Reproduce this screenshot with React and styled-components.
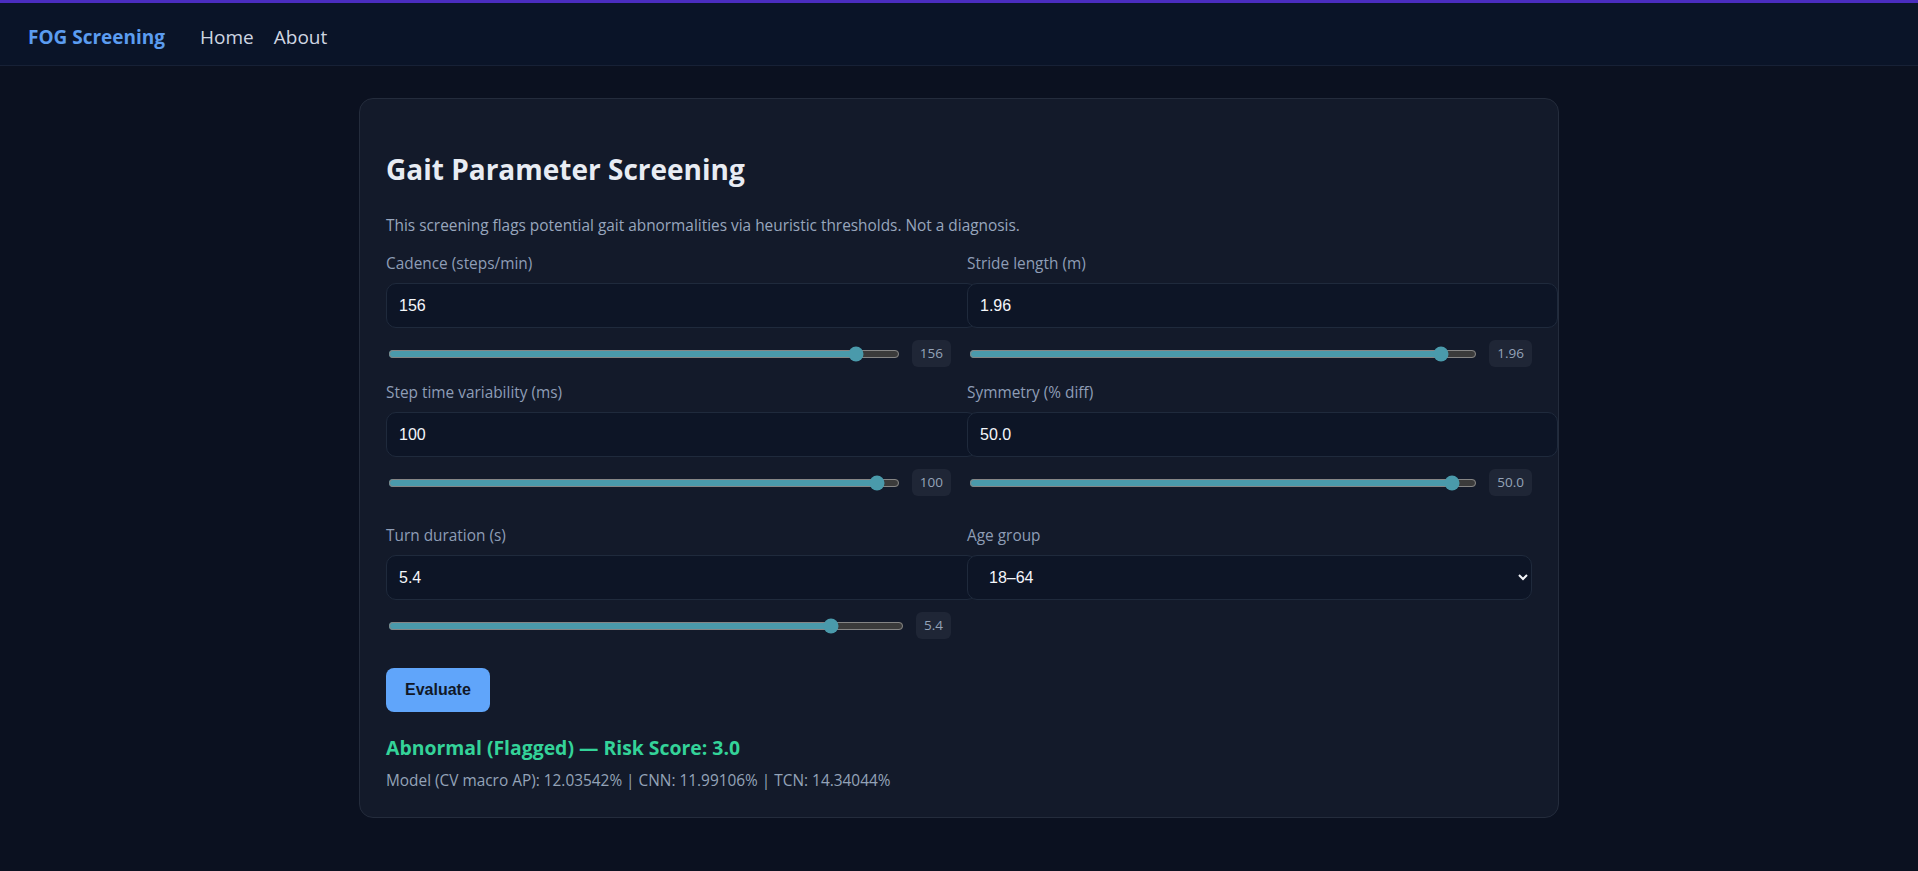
import React, { useState } from 'react';
import styled, { createGlobalStyle } from 'styled-components';

const GlobalStyle = createGlobalStyle`
    html, body{
        margin: 0;
        padding: 0;
        background: #0b1120;
        color-scheme: dark;
    }
    body{
        font-family: "Open Sans", "Noto Sans", sans-serif;
        min-height: 100vh;
    }
`

const fields = [
    { key: 'cadence', label: 'Cadence (steps/min)', min: 40, max: 165, step: 1, fmt: v => String(v) },
    { key: 'stride', label: 'Stride length (m)', min: 0.3, max: 2.06, step: 0.01, fmt: v => v.toFixed(2) },
    { key: 'variability', label: 'Step time variability (ms)', min: 5, max: 103, step: 1, fmt: v => String(v) },
    { key: 'symmetry', label: 'Symmetry (% diff)', min: 0, max: 51.8, step: 0.1, fmt: v => v.toFixed(1) },
];

const App = () => {

    const [values, setValues] = useState({
        cadence: 156,
        stride: 1.96,
        variability: 100,
        symmetry: 50.0,
        turn: 5.4,
    });
    const [age, setAge] = useState('18-64');

    const update = (key, v) => setValues(prev => ({ ...prev, [key]: Number(v) }));

    const renderField = f => (
        <Field key={f.key}>
            <Label>{f.label}</Label>
            <TextInput value={f.fmt(values[f.key])} onChange={e => update(f.key, e.target.value)} />
            <SliderRow>
                <Range type="range" min={f.min} max={f.max} step={f.step} value={values[f.key]}
                    onChange={e => update(f.key, e.target.value)} />
                <Badge>{f.fmt(values[f.key])}</Badge>
            </SliderRow>
        </Field>
    )

    return(
        <>
            <GlobalStyle />
            <Nav>
                <Brand>FOG Screening</Brand>
                <NavLink>Home</NavLink>
                <NavLink>About</NavLink>
            </Nav>
            <Main>
                <Card>
                    <Title>Gait Parameter Screening</Title>
                    <Intro>This screening flags potential gait abnormalities via heuristic thresholds. Not a diagnosis.</Intro>
                    <FieldGrid $top={18}>
                        {fields.map(renderField)}
                    </FieldGrid>
                    <FieldGrid $top={30}>
                        {renderField({ key: 'turn', label: 'Turn duration (s)', min: 0, max: 6.2, step: 0.1, fmt: v => v.toFixed(1) })}
                        <Field>
                            <Label>Age group</Label>
                            <Select value={age} onChange={e => setAge(e.target.value)}>
                                <option value="18-64">18–64</option>
                                <option value="65+">65+</option>
                            </Select>
                        </Field>
                    </FieldGrid>
                    <Button>Evaluate</Button>
                    <Result>Abnormal (Flagged) — Risk Score: 3.0</Result>
                    <ModelLine>Model (CV macro AP): 12.03542% | CNN: 11.99106% | TCN: 14.34044%</ModelLine>
                </Card>
            </Main>
        </>
    )

}

const Nav = styled.nav`
    display: flex;
    align-items: center;
    gap: 20px;
    box-sizing: border-box;
    height: 66px;
    padding: 6px 28px 0;
    background: #0a1428;
    border-top: 3px solid #4a2dbf;
    border-bottom: 1px solid #172136;
`
const Brand = styled.span`
    font-size: 19px;
    font-weight: 700;
    color: #5b9cf0;
    margin-right: 15px;
`
const NavLink = styled.a`
    font-size: 19px;
    color: #cfd6e2;
    cursor: pointer;
`
const Main = styled.main`
    padding: 32px 0 40px;
`
const Card = styled.section`
    width: 1200px;
    box-sizing: border-box;
    margin: 0 auto;
    padding: 26px;
    background: #131a2a;
    border: 1px solid #242c3c;
    border-radius: 14px;
`
const Title = styled.h2`
    margin: 27px 0 0;
    font-size: 28px;
    line-height: 34px;
    font-weight: 700;
    color: #e8ecf3;
`
const Intro = styled.p`
    margin: 30px 0 0;
    font-size: 15.4px;
    line-height: 20px;
    color: #98a6bd;
`
const FieldGrid = styled.div`
    display: grid;
    grid-template-columns: 1fr 1fr;
    column-gap: 16px;
    row-gap: 16px;
    margin-top: ${p => p.$top}px;
`
const Field = styled.div`
    display: flex;
    flex-direction: column;
    min-width: 0;
`
const Label = styled.label`
    font-size: 15.4px;
    line-height: 20px;
    color: #8e9db6;
    margin-bottom: 9px;
`
const TextInput = styled.input`
    width: 100%;
    height: 19px;
    padding: 12px;
    background: #0d1526;
    border: 1px solid #1f2a3c;
    border-radius: 10px;
    color: #f4f6fa;
    font-family: "Liberation Sans", Arial, sans-serif;
    font-size: 16px;
    outline: none;
`
const SliderRow = styled.div`
    display: flex;
    align-items: center;
    gap: 10px;
    margin-top: 12px;
`
const Range = styled.input`
    flex: 1;
    min-width: 0;
    accent-color: #4a9aab;
`
const Badge = styled.span`
    padding: 4px 8px;
    border-radius: 6px;
    background: #1f2636;
    color: #94a3b8;
    font-size: 13.5px;
    line-height: 19px;
`
const Select = styled.select`
    width: 100%;
    height: 45px;
    box-sizing: border-box;
    padding: 0 10px 0 17px;
    background: #0d1526;
    border: 1px solid #1f2a3c;
    border-radius: 10px;
    color: #f4f6fa;
    font-family: "Liberation Sans", Arial, sans-serif;
    font-size: 16px;
    outline: none;
`
const Button = styled.button`
    display: block;
    margin-top: 29px;
    padding: 0 19px;
    height: 44px;
    border: none;
    border-radius: 8px;
    background: #60a5fa;
    color: #111827;
    font-family: "Liberation Sans", Arial, sans-serif;
    font-size: 16px;
    font-weight: 700;
    cursor: pointer;
`
const Result = styled.div`
    margin-top: 24px;
    font-size: 19.4px;
    line-height: 24px;
    font-weight: 700;
    color: #34d399;
`
const ModelLine = styled.div`
    margin-top: 11px;
    font-size: 15.4px;
    line-height: 20px;
    color: #94a3b8;
`

export default App;
